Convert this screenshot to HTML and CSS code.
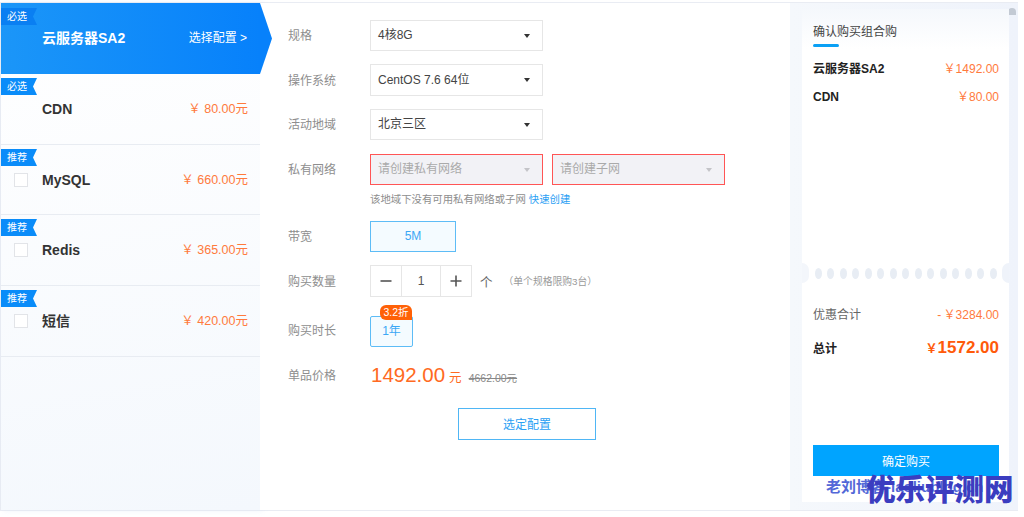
FILE: index.html
```html
<!DOCTYPE html>
<html lang="zh-CN">
<head>
<meta charset="utf-8">
<title>确认购买组合购</title>
<link rel="stylesheet" href="styles.css">
</head>
<body>
<div class="frame">
  <aside class="side">
    <div class="prod active">
      <span class="tag"><svg class="tag-bg" viewBox="0 0 36 18" preserveAspectRatio="none"><path d="M0 0H36L32 9L36 18H0Z"/></svg><span class="tag-t">必选</span></span>
      <span class="name">云服务器SA2</span><span class="cfg">选择配置 &gt;</span>
    </div>
    <div class="prod">
      <span class="tag"><svg class="tag-bg" viewBox="0 0 36 18" preserveAspectRatio="none"><path d="M0 0H36L32 9L36 18H0Z"/></svg><span class="tag-t">必选</span></span>
      <span class="name">CDN</span><span class="price">￥ 80.00元</span>
    </div>
    <div class="prod short">
      <span class="tag"><svg class="tag-bg" viewBox="0 0 36 18" preserveAspectRatio="none"><path d="M0 0H36L32 9L36 18H0Z"/></svg><span class="tag-t">推荐</span></span>
      <span class="check"></span><span class="name">MySQL</span><span class="price">￥ 660.00元</span>
    </div>
    <div class="prod">
      <span class="tag"><svg class="tag-bg" viewBox="0 0 36 18" preserveAspectRatio="none"><path d="M0 0H36L32 9L36 18H0Z"/></svg><span class="tag-t">推荐</span></span>
      <span class="check"></span><span class="name">Redis</span><span class="price">￥ 365.00元</span>
    </div>
    <div class="prod">
      <span class="tag"><svg class="tag-bg" viewBox="0 0 36 18" preserveAspectRatio="none"><path d="M0 0H36L32 9L36 18H0Z"/></svg><span class="tag-t">推荐</span></span>
      <span class="check"></span><span class="name">短信</span><span class="price">￥ 420.00元</span>
    </div>
  </aside>

  <main class="form">
    <div class="row r-spec"><label>规格</label><div class="sel">4核8G<i class="caret"></i></div></div>
    <div class="row r-os"><label>操作系统</label><div class="sel">CentOS 7.6 64位<i class="caret"></i></div></div>
    <div class="row r-region"><label>活动地域</label><div class="sel">北京三区<i class="caret"></i></div></div>
    <div class="row r-net"><label>私有网络</label><div class="sel bad">请创建私有网络<i class="caret"></i></div><div class="sel bad">请创建子网<i class="caret"></i></div></div>
    <p class="hint">该地域下没有可用私有网络或子网 <a>快速创建</a></p>
    <div class="row r-band"><label>带宽</label><div class="opt w86">5M</div></div>
    <div class="row r-qty"><label>购买数量</label>
      <div class="qty"><span class="qb"><svg viewBox="0 0 12 12"><path d="M0.5 6H11.5"/></svg></span><span class="qv">1</span><span class="qb"><svg viewBox="0 0 12 12"><path d="M0.5 6H11.5M6 0.5V11.5"/></svg></span></div>
      <span class="unit">个</span><span class="limit">（单个规格限购3台）</span>
    </div>
    <div class="row r-time"><label>购买时长</label><div class="opt w43">1年<span class="disc">3.2折</span></div></div>
    <div class="row r-price"><label>单品价格</label><span class="big">1492.00</span><span class="yuan">元</span><s class="old">4662.00元</s></div>
    <div class="btn-wrap"><button class="pick">选定配置</button></div>
  </main>

  <section class="cart">
    <i class="thumb"></i>
    <div class="card">
      <h2 class="title">确认购买组合购</h2>
      <div class="line l1"><b>云服务器SA2</b><span>￥1492.00</span></div>
      <div class="line l2"><b>CDN</b><span>￥80.00</span></div>
      <div class="dots">
        <i></i><i></i><i></i><i></i><i></i><i></i><i></i><i></i><i></i><i></i><i></i><i></i><i></i><i></i><i></i>
      </div>
      <div class="line l3"><em>优惠合计</em><span>-&#8201;￥3284.00</span></div>
      <div class="line l4"><b>总计</b><strong><small>￥</small>1572.00</strong></div>
      <button class="buy">确定购买</button>
    </div>
  </section>
</div>
<div class="wm1">老刘博客-laoliublog.cn</div>
<div class="wm2">优乐评测网</div>
</body>
</html>
```
FILE: styles.css
```css
* { box-sizing: border-box; }
html, body { margin: 0; padding: 0; }
body {
  width: 1024px; height: 517px; overflow: hidden; background: #fff; position: relative;
  font-family: "Liberation Sans", "Noto Sans CJK SC", sans-serif; font-size: 12px; color: #333;
}
.frame {
  display: flex; width: 1018px; height: 509px; margin: 2px 0 0 0;
  border-top: 1px solid #e9ecf3; border-bottom: 1px solid #e9ecf3; border-left: 1px solid #e9ecf3;
}

/* left column */
.side {
  width: 259px; flex: none;
  background: linear-gradient(170deg, #fff 0%, #f4f8fd 100%);
  box-shadow: 3px 0 6px rgba(220, 230, 245, .6);
}
.prod {
  position: relative; display: flex; align-items: flex-start; height: 71px;
  padding: 26px 12px 0 41px; border-bottom: 1px solid #e8ecf2;
}
.prod.short { height: 70px; }
.prod.active {
  height: 71px; padding-top: 26px; border: 0; color: #fff;
  background: linear-gradient(90deg, #1b96f8, #0781fb);
}
.prod.active::after {
  content: ""; position: absolute; left: 100%; top: 0; width: 12px; height: 100%;
  background: #0781fb; clip-path: polygon(0 0, 100% 50%, 0 100%);
}
.tag { position: absolute; left: 0; top: 4px; width: 36px; height: 17px; }
.active .tag { top: 5px; }
.tag-bg { position: absolute; inset: 0; width: 100%; height: 100%; fill: #0a8cf9; }
.active .tag-bg { fill: #0a7ff2; }
.tag-t { position: absolute; left: 6px; top: 0; font-size: 10px; line-height: 17px; color: #fff; }
.check {
  position: absolute; left: 13px; top: 28px; width: 14px; height: 14px;
  background: #fff; border: 1px solid #e2e4e8;
}
.name { font-size: 14px; font-weight: 700; line-height: 18px; margin-right: auto; color: #333; }
.active .name { color: #fff; }
.price { font-size: 12.5px; line-height: 18px; color: #ff7a3d; }
.cfg { margin-right: 1px; font-size: 12px; line-height: 18px; color: #fff; }

/* form */
.form { width: 530px; flex: none; padding: 17px 0 0 28px; background: #fff; }
.row { display: flex; align-items: center; }
.row label { width: 82px; flex: none; margin-bottom: 2px; font-size: 12px; color: #8e8e8e; }
.r-os { margin-top: 13px; }
.r-region { margin-top: 13px; }
.r-net { margin-top: 14px; gap: 9px; }
.r-net label { width: 73px; }
.sel {
  position: relative; width: 173px; height: 31px; line-height: 29px; padding-left: 7px;
  border: 1px solid #e6e6e6; font-size: 12px; color: #444; background: #fff;
}
.r-os .sel { height: 32px; line-height: 30px; }
.sel.bad { border-color: #f55; background: #f2f2f6; color: #aaa; }
.caret {
  position: absolute; right: 12px; top: 13px; width: 0; height: 0;
  border-left: 3.5px solid transparent; border-right: 3.5px solid transparent; border-top: 4px solid #333;
}
.bad .caret { border-top-color: #c4c4c8; }
.hint { margin: 8px 0 0 82px; font-size: 10.4px; line-height: 14px; color: #8e8e8e; }
.hint a { color: #2aa0f4; }
.r-band { margin-top: 14px; }
.opt {
  position: relative; height: 31px; line-height: 29px; text-align: center; font-size: 12px;
  color: #3ba7f5; border: 1px solid #5dbcf6; background: #f4fbff;
}
.w86 { width: 86px; }
.w43 { width: 43px; border-radius: 2px; }
.r-qty { margin-top: 13px; }
.qty { display: flex; width: 102px; height: 32px; border: 1px solid #e6e6e6; }
.qb { width: 30px; display: flex; align-items: center; justify-content: center; flex: none; }
.qb svg { width: 12px; height: 12px; stroke: #555; stroke-width: 1.6; fill: none; }
.qv { flex: 1; text-align: center; line-height: 30px; border: solid #e6e6e6; border-width: 0 1px; font-size: 12px; color: #555; }
.unit { margin-left: 8px; font-size: 12.5px; color: #666; }
.limit { margin-left: 11px; font-size: 9.8px; color: #999; }
.r-time { margin-top: 19px; }
.r-time label { margin-bottom: 4px; }
.disc {
  position: absolute; left: 9px; top: -12px; width: 32px; height: 15px; line-height: 15px;
  font-size: 10.5px; color: #fff; background: #ff6107; border-radius: 6px 6px 0 6px;
}
.r-price { margin-top: 13px; align-items: baseline; }
.r-price label { align-self: center; margin-bottom: 2px; }
.big { margin-left: 1px; font-size: 20.5px; line-height: 30px; color: #ff6a22; }
.yuan { margin-left: 4px; font-size: 12.5px; color: #ff6a22; }
.old { margin-left: 7px; font-size: 10.5px; color: #888; }
.btn-wrap { margin-top: 18px; padding-left: 170px; }
.pick {
  display: block; width: 138px; height: 32px; padding: 0 0 2px; font: inherit; font-size: 12px;
  color: #2aa0f4; background: #fff; border: 1px solid #4fb6f5;
}

/* cart */
.cart {
  position: relative; width: 228px; flex: none; padding: 6px 8px 0 12px;
  background: linear-gradient(90deg, #f5f8fc, #eff3fb);
}
.thumb {
  position: absolute; left: 218px; top: 5px; width: 8px; height: 7px;
  border-radius: 4px 4px 0 0; background: #c3cad4;
}
.card {
  position: relative; width: 207px; height: 493px; padding: 14px 10px 0 11px;
  background: linear-gradient(180deg, #f5f8fc 0, #fff 40px);
}
.title {
  position: relative; margin: 0; font-size: 12px; font-weight: 400; line-height: 18px; color: #444;
}
.title::after {
  content: ""; position: absolute; left: 0; top: 21px; width: 26px; height: 3px; border-radius: 2px; background: #0aa0f5;
}
.line { display: flex; justify-content: space-between; align-items: center; line-height: 18px; }
.line b { font-size: 12px; color: #222; }
.line span { font-size: 12px; color: #ff7a3d; }
.line em { font-style: normal; font-size: 12px; color: #666; }
.l1 { margin-top: 19px; }
.l2 { margin-top: 10px; }
.dots {
  display: flex; justify-content: center; gap: 5.5px; margin: 162px -10px 0 -11px; height: 12px; position: relative;
}
.dots i { width: 7px; height: 11px; border-radius: 50%; background: #e8edf4; }
.dots::before, .dots::after {
  content: ""; position: absolute; top: -5px; width: 7px; height: 20px;
}
.dots::before { left: 0; border-radius: 0 7px 7px 0; background: #f3f6fb; }
.dots::after { right: 0; border-radius: 7px 0 0 7px; background: #eff3fa; }
.l3 { margin-top: 26px; }
.l4 { margin-top: 15px; }
.l4 strong { font-size: 17px; color: #ff5a0a; }
.l4 small { font-size: 12px; }
.buy {
  position: absolute; left: 11px; bottom: 26px; width: 186px; height: 31px; padding: 0 0 1px; border: 0;
  font: inherit; font-size: 12px; color: #fff; background: #00a4ff;
}

/* watermarks */
.wm1 {
  position: absolute; left: 826px; top: 477px; font-size: 15px; font-weight: 700; line-height: 20px;
  white-space: nowrap; color: #4a5fd6; opacity: .95;
}
.wm2 {
  position: absolute; left: 866px; top: 471px; font-size: 29.5px; font-weight: 900; line-height: 38px;
  white-space: nowrap; color: #3b3dc0;
}
```
